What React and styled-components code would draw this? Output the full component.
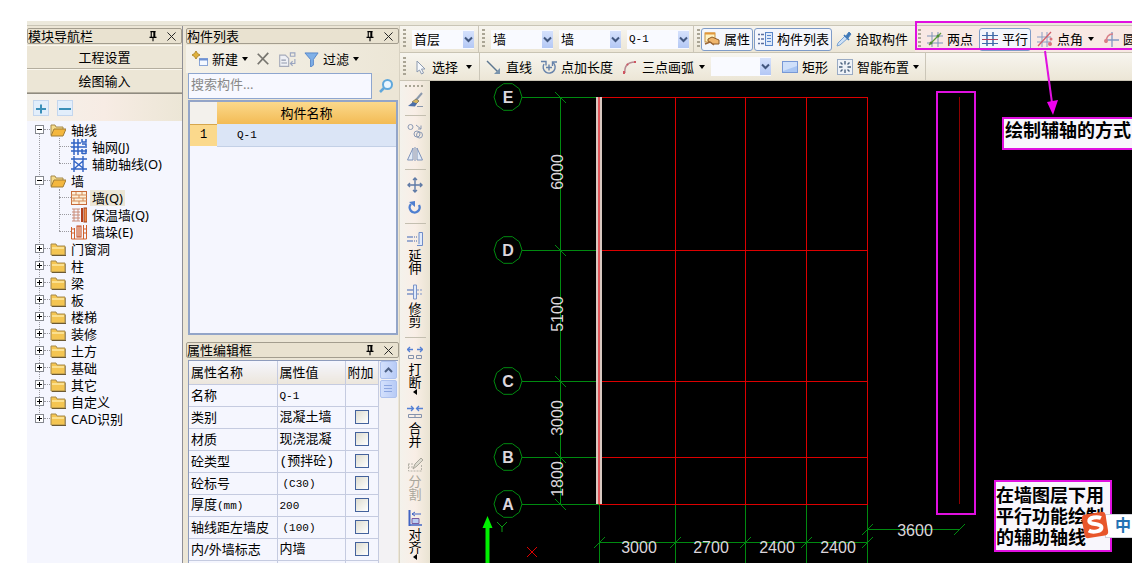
import React from 'react';
import styled, { createGlobalStyle, css } from 'styled-components';

const GlobalStyle = createGlobalStyle`
  * {
    box-sizing: border-box;
  }
  body {
    margin: 0;
    background: #fff;
    overflow: hidden;
  }
  body, button, input, select {
    font-family: 'Noto Sans', 'Noto Sans CJK SC', sans-serif;
    font-size: 13px;
    line-height: 16px;
    color: #000;
  }
  ul {
    list-style: none;
    margin: 0;
    padding: 0;
  }
`;

const Svg = ({ size = 16, children }) => (
  <svg width={size} height={size} viewBox="0 0 16 16" fill="none" aria-hidden="true">
    {children}
  </svg>
);

const icons = {
  pin: (
    <path d="M5 3h6M6 3v6M9 3v6M10 3v6M4 9.5h8M8 10v4" stroke="#000" strokeWidth="1.3" />
  ),
  close: <path d="M3 3l10 10M13 3L3 13" stroke="#222" strokeWidth="1.2" />,
  plus: (
    <>
      <rect x="0.5" y="0.5" width="15" height="15" fill="#e2eefb" stroke="#c3d6ee" />
      <path d="M3 9h10M8 4.500v9" stroke="#3a8fb8" strokeWidth="2" />
    </>
  ),
  minus: (
    <>
      <rect x="0.5" y="0.5" width="15" height="15" fill="#e2eefb" stroke="#c3d6ee" />
      <path d="M2 9h12" stroke="#3a8fb8" strokeWidth="2" />
    </>
  ),
  folder: (
    <>
      <path d="M1 3h5l1 2h8v9H1z" fill="#f4c552" stroke="#a58a4c" />
      <path d="M2 6h12v2H2z" fill="#fbe08f" />
      <path d="M2 14.500h14V6" stroke="#6c5a34" />
    </>
  ),
  folderOpen: (
    <>
      <path d="M1 13V3h4l1 2h7v3" fill="#f7dd8c" stroke="#a58a4c" />
      <path d="M1 14l3-7h12l-3 7z" fill="#f4b73e" stroke="#a07c35" />
    </>
  ),
  axisGrid: (
    <path
      d="M3 0v16M7 0v16M0 4h10M0 8h16M0 12h16M11 0v3h4V0M11 5h4v2M11 3h4M11 10v5M15 10v5M11 14.500h4"
      stroke="#2f62c4"
      strokeWidth="1.5"
    />
  ),
  axisHelp: (
    <path d="M3 0v16M12 0v16M0 3h16M0 13h16M3 5l9 7M12 5l-8 7" stroke="#2f62c4" strokeWidth="1.4" />
  ),
  wall: (
    <>
      <rect x="0.5" y="1.500" width="15" height="13" fill="#fdf0dc" stroke="#c66a3a" />
      <path d="M0 5h16M0 8h16M0 11h16M5 2v3M11 2v3M8 5v3M3 8v3M12 8v3M8 11v3" stroke="#d48a55" />
    </>
  ),
  wallWarm: (
    <>
      <path d="M1 2h8M1 5h8M1 8h8M1 11h8M1 14h8M3 2v12M7 2v12" stroke="#c98b79" />
      <rect x="10" y="1" width="2" height="14" fill="#b4401c" />
      <rect x="13" y="1" width="3" height="14" fill="#ef8d4c" stroke="#a0401c" />
    </>
  ),
  wallPier: (
    <>
      <path d="M.5 3v12M3.500 4v11M.5 15h15M12.500 1v14M15.500 1v14M0 5h4M0 9h4M12 5h4M12 9h4" stroke="#d0602c" />
      <rect x="6" y="2" width="4" height="11" fill="#fff3e8" stroke="#c2451a" />
      <path d="M8 2v11" stroke="#c2451a" />
    </>
  ),
  create: (
    <>
      <path d="M4 0l1.500 2.500L8 4 5.500 5.500 4 8 2.500 5.500 0 4l2.500-1.500z" fill="#e0b13c" stroke="#b28a2e" />
      <rect x="7.500" y="7.500" width="8" height="7" fill="#f4f8ff" stroke="#8ba6d6" />
      <path d="M7 8.500h9" stroke="#6f93d4" strokeWidth="2" />
    </>
  ),
  remove: <path d="M2 2l12 12M14 1L2 14" stroke="#77756f" strokeWidth="2" />,
  copyTo: (
    <>
      <path d="M1.500 4.500h5l3 3v7h-8z" fill="#eef0f5" stroke="#a6abba" />
      <path d="M3 9h4M3 11.500h5" stroke="#9299ad" />
      <path d="M11 2.500h4v3h-4zM15 8v4h-4M13 10l-2 2 2 2" stroke="#9aa5c0" />
    </>
  ),
  filter: <path d="M1 1h14L10 8v6l-3 2V8z" fill="#7fb0e8" stroke="#5685c7" />,
  search: (
    <>
      <circle cx="9.500" cy="6.500" r="4.500" fill="#eaf6ff" stroke="#5fa8dc" strokeWidth="2" />
      <path d="M6 10l-4 4" stroke="#5fa8dc" strokeWidth="2.500" />
    </>
  ),
  property: (
    <>
      <rect x="1" y="2" width="10" height="9" fill="#fff2c4" stroke="#c58f3c" />
      <path d="M1 2.500h10" stroke="#e2973a" strokeWidth="2" />
      <path d="M4 8l4-2 7 3v4H9L4 10z" fill="#efb56c" stroke="#8c5a28" />
      <path d="M1 13l5-2 4 3" stroke="#9b6634" strokeWidth="1.500" />
    </>
  ),
  list: (
    <>
      <path d="M1 3.500h2M1 8h2M1 12.500h2M4 3.500h3M4 8h3M4 12.500h3" stroke="#5a6fa0" strokeWidth="1.300" />
      <rect x="8.500" y="1.500" width="7" height="13" fill="#dfeafa" stroke="#5a86c8" />
      <path d="M10 4.500h4M10 7.500h4M10 10.500h4" stroke="#5a86c8" />
    </>
  ),
  dropper: (
    <>
      <path d="M9 5l-7 7-1 3 3-1 8-7z" fill="#cfe2f7" stroke="#7ba4d2" />
      <path d="M8 4l5 5" stroke="#3c78b8" strokeWidth="1.600" />
      <path d="M10 5l3-4 2 2-3 4z" fill="#3c78b8" stroke="#4c80ba" />
    </>
  ),
  twoPoint: (
    <>
      <path d="M5 1v15M11 1v15M0 5h16M0 12h16" stroke="#7d93b8" />
      <path d="M2 14L14 2" stroke="#5f9c3e" strokeWidth="1.300" />
      <circle cx="4" cy="12" r="1.500" fill="#4e8c35" />
      <circle cx="11" cy="5" r="1.500" fill="#4e8c35" />
    </>
  ),
  parallel: (
    <>
      <path d="M5 1v14M11 1v14" stroke="#3f69a8" strokeWidth="1.500" />
      <path d="M0 4.500h16M0 12.500h16" stroke="#3f69a8" />
      <path d="M0 8.500h16" stroke="#b0405c" />
    </>
  ),
  pointAngle: (
    <>
      <path d="M5 1v15M10 1v15M0 6h14M0 11h14" stroke="#8a9cc4" />
      <path d="M1 15L14 1" stroke="#d0606a" strokeWidth="1.300" />
      <circle cx="14" cy="8" r="1.500" fill="#d8737c" />
      <circle cx="13" cy="13" r="2" fill="#d8737c" />
    </>
  ),
  circleAxis: (
    <>
      <path d="M9 1v15M3 9h13" stroke="#8298c2" strokeWidth="1.300" />
      <path d="M10 3C5 3 3 6 3 12" stroke="#d87f88" strokeWidth="1.500" />
      <circle cx="3" cy="10" r="2" fill="#d87f88" />
    </>
  ),
  cursor: <path d="M5 2v11l2.500-2 2 4 2-1-2-4h3.500z" fill="#f6f8fb" stroke="#8c9ab0" />,
  line: (
    <>
      <path d="M1 2l11 11" stroke="#5c7690" strokeWidth="1.400" />
      <path d="M14 9v6H8z" fill="#7a94ad" />
    </>
  ),
  pointLength: (
    <>
      <path d="M3 5a6 6 0 1 0 9-1.500M8 5.500v6M5 8.500h6" stroke="#6682aa" strokeWidth="1.400" />
      <path d="M0 2.500h5v4M11.500 7V3H16" stroke="#6682aa" strokeWidth="1.400" />
    </>
  ),
  arc: (
    <>
      <path d="M3 14C2 7 6 3 13 3" stroke="#b98a92" strokeWidth="1.500" />
      <path d="M2 12v3M5 6l1-1M12 3h2" stroke="#cf5560" strokeWidth="2" />
    </>
  ),
  rect: (
    <>
      <rect x="0.500" y="2.500" width="15" height="11" fill="#a9c6f3" stroke="#7899d6" />
      <path d="M1 3h14v4L1 12z" fill="#cfe0fa" />
    </>
  ),
  smart: (
    <>
      <rect x="0.500" y="0.500" width="15" height="15" fill="#eef2f8" stroke="#9aabc4" />
      <path d="M8 2v3.500M8 10.500V14M2 8h3.500M10.500 8H14M3.500 3.500l2 2M12.500 3.500l-2 2M3.500 12.500l2-2M12.500 12.500l-2-2" stroke="#49617f" strokeWidth="1.400" />
    </>
  ),
  brush: (
    <>
      <path d="M15 1l-6 7" stroke="#8a98ac" strokeWidth="2" />
      <path d="M9 7l-4 3 3 3 4-4z" fill="#d9b65c" stroke="#8c8468" />
      <path d="M6 10L1 14l7 .5 2-3z" fill="#4c6fa8" />
      <path d="M10 14.500h6" stroke="#8a98ac" />
    </>
  ),
  copy: (
    <>
      <circle cx="3.500" cy="4" r="2.500" stroke="#8c9ab4" />
      <circle cx="10" cy="11" r="3" stroke="#8c9ab4" />
      <circle cx="12.500" cy="12" r="3" stroke="#8c9ab4" />
      <path d="M9 2l5 4M14 2.500V6h-3" stroke="#8c9ab4" />
    </>
  ),
  mirror: (
    <>
      <path d="M6 2v12H.5zM10 2v12h5.500z" fill="#e3ecf8" stroke="#7f93b8" />
      <path d="M8 1v14" stroke="#7f93b8" />
    </>
  ),
  move: (
    <path d="M8 1v14M1 8h14M6 3l2-2 2 2M6 13l2 2 2-2M3 6L1 8l2 2M13 6l2 2-2 2" stroke="#5f7aa6" strokeWidth="1.400" />
  ),
  rotate: (
    <>
      <path d="M4 4a5 5 0 1 0 8 1" stroke="#4f7fd0" strokeWidth="2.400" />
      <path d="M8 1v6L2 2z" fill="#4f7fd0" />
    </>
  ),
  extend: (
    <>
      <path d="M0 6h6M0 10h6" stroke="#7c94c8" strokeWidth="1.600" />
      <path d="M7 6h4M7 10h4" stroke="#4463a8" strokeDasharray="1 1" />
      <path d="M10 14.500h5.500v-13H12V13" fill="#e1eafa" stroke="#6f8cc8" />
    </>
  ),
  trim: (
    <>
      <path d="M0 6h6M0 10h6" stroke="#7c94c8" strokeWidth="1.400" />
      <path d="M10 6h6M10 10h6" stroke="#7c94c8" strokeDasharray="2 1" />
      <path d="M6.500 1v14h3V1z" fill="#e1eafa" stroke="#7c94c8" />
    </>
  ),
  breakApart: (
    <>
      <path d="M0 4.500h6M10 4.500h6M3 2L.5 4.500 3 7M13 2l2.500 2.500L13 7" stroke="#5580d4" strokeWidth="1.300" />
      <path d="M1.500 10.500h5v3h-5zM9.500 10.500h5v3h-5z" stroke="#8492ac" />
    </>
  ),
  merge: (
    <>
      <path d="M0 4.500h6M10 4.500h6M4 2l2.500 2.500L4 7M12 2L9.500 4.500 12 7" stroke="#5580d4" strokeWidth="1.300" />
      <path d="M1.500 10.500h13v3h-13zM8 10v4" stroke="#8492ac" />
    </>
  ),
  divide: (
    <>
      <path d="M1.500 7v7h13V7M1 7h6M1 10h5" stroke="#b5b2a8" strokeDasharray="2 1" />
      <path d="M6 12l2-5 6-6 2 2-6 6z" fill="#dedbd0" stroke="#aaa79c" />
    </>
  ),
  align: (
    <>
      <path d="M2.500 0v16" stroke="#4164c4" strokeWidth="2" />
      <path d="M5 4h9M8 2L5 4l3 2" stroke="#4164c4" />
      <path d="M5 8.500h7v5H5z" fill="#b9cdf3" stroke="#7a5ca0" />
      <path d="M2 15h13" stroke="#4164c4" strokeWidth="1.500" />
    </>
  ),
};

const Icon = ({ name, size }) => <Svg size={size}>{icons[name]}</Svg>;

const Page = styled.div`
  display: flex;
  flex-direction: column;
  height: 100vh;
  padding: 21px 0 0 27px;
  position: relative;
  overflow: hidden;
`;

const TopEdge = styled.div`
  flex: none;
  height: 5px;
  background: #ece9dc;
  border-bottom: 1px solid #c9c5b6;
`;

const Main = styled.main`
  flex: 1;
  min-height: 0;
  display: flex;
  background: #ece6d6;
`;

const Sidebar = styled.nav`
  flex: none;
  width: 156px;
  display: flex;
  flex-direction: column;
  padding-top: 2px;
  border-right: 1px solid #8f8f96;
`;

const Bar = styled.header`
  flex: none;
  display: flex;
  align-items: center;
  height: 16px;
  margin-bottom: 1px;
  border: 1px solid #a39d8e;
  border-radius: 2px;
  background: #e9e2d0;
  overflow: hidden;
`;

const BarTitle = styled.h2`
  flex: 1;
  margin: 0;
  font-size: 13px;
  font-weight: 400;
  line-height: 14px;
  white-space: nowrap;
`;

const BarButton = styled.button`
  display: flex;
  width: 19px;
  justify-content: center;
  padding: 0;
  border: 0;
  background: none;
`;

const PanelBar = ({ title }) => (
  <Bar>
    <BarTitle>{title}</BarTitle>
    <BarButton aria-label="固定">
      <Icon name="pin" size={14} />
    </BarButton>
    <BarButton aria-label="关闭">
      <Icon name="close" size={13} />
    </BarButton>
  </Bar>
);

const ModeButton = styled.button`
  flex: none;
  height: 24px;
  padding: 0;
  border: 0;
  border-bottom: 1px solid #b4ae9f;
  border-top: 1px solid #faf7ee;
  background: #ece6d6;
`;

const TreeTools = styled.div`
  flex: none;
  display: flex;
  gap: 8px;
  padding: 6px 6px;
  height: 28px;
  border-top: 1px solid #8f8b80;
  background: linear-gradient(90deg, #f4f1ea, #f7ece4 50%, #ece6d6);
`;

const PlainButton = styled.button`
  display: flex;
  align-items: center;
  padding: 0;
  border: 0;
  background: none;
`;

const Tree = styled.ul`
  flex: 1;
  position: relative;
  background: #f5f6fe;

  &::before {
    content: '';
    position: absolute;
    left: 12px;
    top: 9px;
    height: 289px;
    border-left: 1px dotted #9a9aa0;
  }
`;

const Branch = styled.ul`
  position: relative;

  &::before {
    content: '';
    position: absolute;
    left: 32px;
    top: 0;
    bottom: 9px;
    border-left: 1px dotted #9a9aa0;
  }
`;

const TreeRow = styled.div`
  display: flex;
  align-items: center;
  height: 17px;
  padding-left: ${(p) => (p.$child ? 32 : 8)}px;
  white-space: nowrap;
  position: relative;
`;

const Dots = styled.span`
  width: ${(p) => (p.$child ? 12 : 6)}px;
  border-bottom: 1px dotted #9a9aa0;
`;

const TreeText = styled.span`
  margin-left: 3px;
  padding: 0 2px;
  line-height: 16px;
  background: ${(p) => (p.$active ? '#ece6d6' : 'none')};
`;

const Expander = styled.button`
  width: 9px;
  height: 9px;
  padding: 0;
  border: 1px solid #85888f;
  background: #fff;
  display: flex;
`;

const TREE = [
  {
    name: '轴线',
    items: [
      ['轴网(J)', 'axisGrid'],
      ['辅助轴线(O)', 'axisHelp'],
    ],
  },
  {
    name: '墙',
    items: [
      ['墙(Q)', 'wall'],
      ['保温墙(Q)', 'wallWarm'],
      ['墙垛(E)', 'wallPier'],
    ],
  },
  ...['门窗洞', '柱', '梁', '板', '楼梯', '装修', '土方', '基础', '其它', '自定义', 'CAD识别'].map(
    (name) => ({ name })
  ),
];

const ModuleNav = () => (
  <Sidebar>
    <PanelBar title="模块导航栏" />
    <ModeButton>工程设置</ModeButton>
    <ModeButton>绘图输入</ModeButton>
    <TreeTools>
      <PlainButton aria-label="展开">
        <Icon name="plus" />
      </PlainButton>
      <PlainButton aria-label="折叠">
        <Icon name="minus" />
      </PlainButton>
    </TreeTools>
    <Tree>
      {TREE.map(({ name, items }) => (
        <li key={name}>
          <TreeRow>
            <Expander aria-label={name}>
              <svg width="7" height="7" viewBox="0 0 7 7">
                <path d={items ? 'M1 3.500h5' : 'M1 3.500h5M3.500 1v5'} stroke="#000" />
              </svg>
            </Expander>
            <Dots />
            <Icon name={items ? 'folderOpen' : 'folder'} />
            <TreeText>{name}</TreeText>
          </TreeRow>
          {items && (
            <Branch>
              {items.map(([text, icon]) => (
                <li key={text}>
                  <TreeRow $child>
                    <Dots $child />
                    <Icon name={icon} />
                    <TreeText $active={text === '墙(Q)'}>{text}</TreeText>
                  </TreeRow>
                </li>
              ))}
            </Branch>
          )}
        </li>
      ))}
    </Tree>
  </Sidebar>
);

const MiddleColumn = styled.section`
  flex: none;
  width: 214px;
  margin: 0 0 0 3px;
  padding-top: 2px;
  display: flex;
  flex-direction: column;
  border-right: 1px solid #d8d2c2;
`;

const ListTools = styled.div`
  flex: none;
  display: flex;
  align-items: center;
  gap: 8px;
  height: 28px;
  padding: 0 6px;
  background: linear-gradient(90deg, #f5f2ea, #ece6d6);
`;

const ToolLabel = styled(PlainButton)`
  gap: 4px;
`;

const Caret = styled.span`
  border: 3px solid transparent;
  border-top: 4px solid #000;
  border-bottom: 0;
  margin-left: ${(p) => p.$gap || 0}px;
`;

const SearchRow = styled.form`
  flex: none;
  display: flex;
  height: 26px;
  margin-left: 2px;
`;

const SearchInput = styled.input`
  width: 184px;
  padding: 0 2px 4px;
  border: 1px solid #8ea6cf;
  background: #f7f8ff;
  outline: 0;

  &::placeholder {
    color: #888;
  }
`;

const SearchButton = styled(PlainButton)`
  flex: 1;
  justify-content: center;
`;

const ListBox = styled.div`
  flex: none;
  height: 235px;
  margin: 1px 1px 7px 2px;
  border: 2px solid #93a5c8;
  background: #f5f6fe;
`;

const ListTable = styled.table`
  width: 100%;
  border-collapse: collapse;
  table-layout: fixed;

  th, td {
    height: 22px;
    padding: 0;
    font-weight: 400;
    line-height: 16px;
  }
  thead th {
    background: linear-gradient(#fbd98c, #f3bb55);
  }
  thead td {
    width: 27px;
    background: #f3f1ec;
  }
  tbody th {
    background: #fbd98c;
    border-top: 1px solid #d6a64c;
    font-size: 12px;
    font-family: 'Liberation Mono', monospace;
  }
  tbody td {
    padding-left: 20px;
    background: #dbe5f6;
    border-bottom: 1px solid #c3d0e6;
    font-size: 11px;
    font-family: 'Liberation Mono', monospace;
  }
`;

const PropertyBox = styled.div`
  flex: 1;
  min-height: 0;
  overflow: hidden;
  display: flex;
  margin: 1px 1px 0 2px;
  border-top: 1px solid #8e9cbc;
  border-left: 1px solid #8e9cbc;
  background: #f5f6fe;
`;

const PropertyTable = styled.table`
  align-self: flex-start;
  width: 189px;
  border-collapse: collapse;
  table-layout: fixed;

  th, td {
    height: 22px;
    padding: 0 2px;
    border: 1px solid #c5cbe0;
    border-top: 0;
    border-left: 0;
    text-align: left;
    font-weight: 400;
    line-height: 16px;
    white-space: nowrap;
    overflow: hidden;
  }
  thead th {
    height: 23px;
    background: linear-gradient(#f5f6fe, #ece6dc);
  }
`;

const Value = styled.span`
  font-family: 'Liberation Mono', 'Noto Sans CJK SC', monospace;
  font-size: ${(p) => (p.$latin ? 11 : 13)}px;
  padding-left: ${(p) => (p.$indent ? 3 : 0)}px;
`;

const Unit = styled.span`
  font-family: 'Liberation Mono', monospace;
  font-size: 11px;
`;

const Check = styled.input`
  appearance: none;
  display: block;
  width: 14px;
  height: 14px;
  margin: 0 auto;
  border: 1px solid #44629c;
  background: linear-gradient(135deg, #dedccf, #fff);
`;

const ScrollBar = styled.div`
  flex: 1;
  display: flex;
  flex-direction: column;
  align-items: center;
  gap: 1px;
  background: #f3f2f4;
`;

const ScrollPart = styled.button`
  display: flex;
  align-items: center;
  justify-content: center;
  width: 17px;
  height: 18px;
  padding: 0;
  border: 1px solid #aec2ee;
  border-radius: 2px;
  background: linear-gradient(90deg, #d3e0fc, #b8cbf6);
`;

const PROPERTIES = [
  { name: '名称', value: 'Q-1', latin: true, fixed: true },
  { name: '类别', value: '混凝土墙' },
  { name: '材质', value: '现浇混凝' },
  { name: '砼类型', value: '(预拌砼)' },
  { name: '砼标号', value: '(C30)', latin: true, indent: true },
  { name: '厚度', unit: '(mm)', value: '200', latin: true },
  { name: '轴线距左墙皮', value: '(100)', latin: true, indent: true },
  { name: '内/外墙标志', value: '内墙' },
  { name: '', value: '' },
];

const ComponentPanels = () => (
  <MiddleColumn>
    <PanelBar title="构件列表" />
    <ListTools>
      <ToolLabel>
        <Icon name="create" />
        新建
        <Caret />
      </ToolLabel>
      <PlainButton aria-label="删除">
        <Icon name="remove" size={14} />
      </PlainButton>
      <PlainButton aria-label="复制">
        <Icon name="copyTo" size={18} />
      </PlainButton>
      <ToolLabel>
        <Icon name="filter" size={15} />
        过滤
        <Caret />
      </ToolLabel>
    </ListTools>
    <SearchRow>
      <SearchInput aria-label="搜索构件" placeholder="搜索构件..." />
      <SearchButton type="button" aria-label="搜索">
        <Icon name="search" />
      </SearchButton>
    </SearchRow>
    <ListBox>
      <ListTable>
        <thead>
          <tr>
            <td />
            <th>构件名称</th>
          </tr>
        </thead>
        <tbody>
          <tr>
            <th>1</th>
            <td>Q-1</td>
          </tr>
        </tbody>
      </ListTable>
    </ListBox>
    <PanelBar title="属性编辑框" />
    <PropertyBox>
      <PropertyTable>
        <colgroup>
          <col width="88" />
          <col width="68" />
          <col width="33" />
        </colgroup>
        <thead>
          <tr>
            <th>属性名称</th>
            <th>属性值</th>
            <th>附加</th>
          </tr>
        </thead>
        <tbody>
          {PROPERTIES.map((p) => (
            <tr key={p.name}>
              <td>
                {p.name}
                {p.unit && <Unit>{p.unit}</Unit>}
              </td>
              <td>
                <Value $latin={p.latin} $indent={p.indent}>
                  {p.value}
                </Value>
              </td>
              <td>{!p.fixed && <Check type="checkbox" aria-label={`附加 ${p.name}`} />}</td>
            </tr>
          ))}
        </tbody>
      </PropertyTable>
      <ScrollBar>
        <ScrollPart aria-label="向上">
          <svg width="9" height="6" viewBox="0 0 9 6" fill="none">
            <path d="M1 5l3.500-3.500L8 5" stroke="#4d6185" strokeWidth="2" />
          </svg>
        </ScrollPart>
        <ScrollPart aria-label="滚动">
          <svg width="8" height="8" viewBox="0 0 8 8">
            <path d="M0 .5h8M0 3.500h8M0 6.500h8" stroke="#8ca6e0" />
          </svg>
        </ScrollPart>
      </ScrollBar>
    </PropertyBox>
  </MiddleColumn>
);

const Work = styled.section`
  flex: 1;
  min-width: 0;
  display: flex;
  flex-direction: column;
`;

const Toolbar = styled.div`
  flex: none;
  display: flex;
  height: ${(p) => p.$height}px;
  border-bottom: 1px solid #c9c4b4;
  background: linear-gradient(#f7f5ef, #ece6d6);
`;

const Group = styled.div`
  flex: none;
  display: flex;
  align-items: center;
  gap: ${(p) => p.$gap}px;
  padding: 0 ${(p) => p.$end ?? 4}px 0 3px;
  border-right: ${(p) => (p.$open ? 0 : '1px solid #cbc6b8')};
`;

const MarkedGroup = styled(Group)`
  flex: 1;
  min-width: 0;
  position: relative;
  background: #f8e8e4;

  &::after {
    content: '';
    position: absolute;
    inset: -5px -2px 2px 0;
    border: 2px solid #e010e0;
    pointer-events: none;
  }
`;

const Grip = styled.span`
  flex: none;
  width: 3px;
  height: 20px;
  background: repeating-linear-gradient(#aaa595 0 2px, transparent 2px 4px);
`;

const ToolButton = styled.button`
  flex: none;
  display: flex;
  align-items: center;
  gap: 4px;
  height: 23px;
  padding: 0 2px;
  border: 1px solid transparent;
  border-radius: 3px;
  background: none;
  white-space: nowrap;

  ${(p) =>
    p.$on &&
    css`
      border-color: #7f9cc8;
      background: #f4f6fc;
    `}
`;

const ComboBox = styled.span`
  position: relative;
  display: flex;
  width: ${(p) => p.$width || 62}px;
  margin-right: ${(p) => p.$after || 0}px;
`;

const ComboSelect = styled.select`
  appearance: none;
  width: 100%;
  height: 19px;
  padding: 0 12px 0 2px;
  border: 0;
  background: #f9faff;
  ${(p) =>
    p.$mono &&
    css`
      font-family: 'Liberation Mono', monospace;
      font-size: 11px;
    `}
`;

const ComboArrow = styled.span`
  position: absolute;
  right: 0;
  top: 1px;
  width: 11px;
  height: 17px;
  display: flex;
  align-items: center;
  justify-content: center;
  background: linear-gradient(#d5e1fc, #b4c8f5);
  pointer-events: none;
`;

const Combo = ({ label, value, ...rest }) => (
  <ComboBox {...rest}>
    <ComboSelect aria-label={label} $mono={value === 'Q-1'}>
      <option>{value}</option>
    </ComboSelect>
    <ComboArrow>
      <svg width="9" height="7" viewBox="0 0 9 7" fill="none">
        <path d="M1 1.500L4.500 5 8 1.500" stroke="#42577f" strokeWidth="2" />
      </svg>
    </ComboArrow>
  </ComboBox>
);

const Tool = ({ icon, text, on, caret }) => (
  <ToolButton $on={on}>
    <Icon name={icon} />
    {text}
    {caret !== undefined && <Caret $gap={caret} />}
  </ToolButton>
);

const Body = styled.div`
  flex: 1;
  min-height: 0;
  display: flex;
`;

const SideTools = styled.div`
  flex: none;
  width: 30px;
  display: flex;
  flex-direction: column;
  align-items: center;
  gap: 7px;
  padding-top: 4px;
  overflow: hidden;
  background: linear-gradient(90deg, #f4f2ec, #f9eee6 50%, #e9e3d2);
`;

const TopGrip = styled.span`
  flex: none;
  width: 20px;
  height: 2px;
  margin-bottom: -2px;
  background: repeating-linear-gradient(90deg, #aaa595 0 2px, transparent 2px 4px);
`;

const Rule = styled.span`
  flex: none;
  width: 21px;
  height: 1px;
  background: #c4bfb0;
`;

const SideButton = styled.button`
  flex: none;
  display: flex;
  flex-direction: column;
  align-items: center;
  gap: 2px;
  width: 20px;
  padding: 0 0 ${(p) => (p.$labelled ? 2 : 0)}px;
  border: 0;
  background: none;
  color: ${(p) => (p.disabled ? '#aaa79c' : '#000')};
`;

const SideText = styled.span`
  width: 13px;
  line-height: 13px;
  word-break: break-all;
`;

const SideCaret = styled.span`
  border: 3px solid transparent;
  border-right: 4px solid #000;
  border-left: 0;
  margin-top: -2px;
`;

const SIDE_TOOLS = [
  { icon: 'brush', label: '格式刷' },
  null,
  { icon: 'copy', label: '复制' },
  { icon: 'mirror', label: '镜像' },
  null,
  { icon: 'move', label: '移动' },
  { icon: 'rotate', label: '旋转' },
  null,
  { icon: 'extend', text: '延伸' },
  { icon: 'trim', text: '修剪' },
  null,
  { icon: 'breakApart', text: '打断', caret: true },
  { icon: 'merge', text: '合并' },
  { icon: 'divide', text: '分割', off: true },
  { icon: 'align', text: '对齐', caret: true },
];

const Canvas = styled.div`
  flex: 1;
  min-width: 0;
  position: relative;
  overflow: hidden;
  background: #000;

  > svg {
    display: block;
  }
`;

const AXES = [
  ['E', 16],
  ['D', 169],
  ['C', 300],
  ['B', 376],
  ['A', 423],
];
const COLUMNS = [169, 245, 315, 376, 437];
const SPANS_V = [
  ['6000', 91],
  ['5100', 233],
  ['3000', 337],
  ['1800', 398],
];
const SPANS_H = [
  ['3000', 209, 472],
  ['2700', 281, 472],
  ['2400', 347, 472],
  ['2400', 408, 472],
  ['3600', 485, 455],
];

const bubble = (cx, cy, r) =>
  Array.from({ length: 10 }, (_, i) => {
    const a = (i * Math.PI) / 5;
    return `${cx + r * Math.cos(a)},${cy + r * Math.sin(a)}`;
  }).join(' ');

const Drawing = () => (
  <svg width="100%" height="100%" fill="none" fontFamily="Liberation Sans, sans-serif">
    <g stroke="#008a10">
      <path d="M130.500 16V423M169 461.500H437M437 448.500H530" />
      {COLUMNS.map((x) => (
        <path key={x} d={`M${x + 0.5} 423V600M${x - 5} 467l11-11`} />
      ))}
      <path d="M432 454l11-11M524 454l11-11" />
      {AXES.map(([name, y]) => (
        <g key={name}>
          <polygon points={bubble(78, y, 14)} />
          <path d={`M92 ${y + 0.5}H169M125 ${y - 5}l11 11`} />
        </g>
      ))}
    </g>
    <g stroke="#dc0000">
      {AXES.map(([name, y]) => (
        <path key={name} d={`M169 ${y + 0.5}H438`} />
      ))}
      {COLUMNS.slice(1).map((x) => (
        <path key={x} d={`M${x + 0.5} 16V423`} />
      ))}
      <path d="M529.500 16V423" stroke="#8c0000" />
      <path d="M97 466l10 10M107 466l-10 10" />
    </g>
    <path d="M169 16V423" stroke="#d8c8c0" strokeWidth="6" />
    <path d="M169 16V423" stroke="#e0565a" strokeWidth="2" />
    <g fill="#dcd6dc" fontSize="16" textAnchor="middle">
      {AXES.map(([name, y]) => (
        <text key={name} x="78" y={y + 6} fontWeight="700">
          {name}
        </text>
      ))}
      {SPANS_V.map(([text, y]) => (
        <text key={text} transform={`translate(133 ${y}) rotate(-90)`}>
          {text}
        </text>
      ))}
      {SPANS_H.map(([text, x, y]) => (
        <text key={x} x={x} y={y}>
          {text}
        </text>
      ))}
    </g>
    <path d="M57.500 445V600" stroke="#00f000" strokeWidth="4" />
    <path d="M57.500 435l5 12h-10z" fill="#00f000" />
    <path d="M67 441l5 5 5-5M72 446v5" stroke="#0a9a12" />
  </svg>
);

const Highlight = styled.div`
  position: absolute;
  left: 506px;
  top: 10px;
  width: 40px;
  height: 424px;
  border: 2px solid #e010e0;
`;

const Note = styled.p`
  position: absolute;
  margin: 0;
  border: 2px solid #e010e0;
  background: #f8f6fc;
  font-size: 18px;
  font-weight: 700;
  line-height: 21px;
`;

const MethodNote = styled(Note)`
  left: 572px;
  top: 36px;
  width: 140px;
  height: 33px;
  padding: 1px;
  white-space: nowrap;
`;

const LayerNote = styled(Note)`
  left: 564px;
  top: 399px;
  width: 118px;
  height: 72px;
  padding: 3px 0;
`;

const Pointer = styled.svg`
  position: absolute;
  left: 1035px;
  top: 50px;
  pointer-events: none;
`;

const ImeBar = styled.div`
  position: absolute;
  left: 675px;
  top: 433px;
  right: 0;
  height: 24px;
  padding-left: 9px;
  border: 1px solid #d0d4dc;
  border-right: 0;
  background: #fff;
  color: #2272b4;
  font-size: 16px;
  font-weight: 700;
  line-height: 21px;
`;

const ImeLogo = styled.svg`
  position: absolute;
  left: 650px;
  top: 429px;
`;

const App = () => {
  return (
    <Page>
      <GlobalStyle />
      <TopEdge />
      <Main>
        <ModuleNav />
        <ComponentPanels />
        <Work>
          <Toolbar $height={27}>
            <Group $gap={6}>
              <Grip />
              <Combo label="楼层" value="首层" />
            </Group>
            <Group $gap={6}>
              <Grip />
              <Combo label="类别" value="墙" />
              <Combo label="构件类型" value="墙" />
              <Combo label="构件" value="Q-1" />
            </Group>
            <Group $gap={1} $end={4} $open>
              <Grip />
              <Tool icon="property" text="属性" on />
              <Tool icon="list" text="构件列表" on />
              <Tool icon="dropper" text="拾取构件" />
            </Group>
            <MarkedGroup $gap={3} $open>
              <Grip />
              <Tool icon="twoPoint" text="两点" />
              <Tool icon="parallel" text="平行" on />
              <Tool icon="pointAngle" text="点角" caret={1} />
              <Tool icon="circleAxis" text="圆" />
            </MarkedGroup>
          </Toolbar>
          <Toolbar $height={28}>
            <Group $gap={3}>
              <Grip />
              <Tool icon="cursor" text="选择" caret={4} />
            </Group>
            <Group $gap={3} $end={3}>
              <Tool icon="line" text="直线" />
              <Tool icon="pointLength" text="点加长度" />
              <Tool icon="arc" text="三点画弧" caret={1} />
              <Combo label="画弧方式" value="" $width={60} $after={5} />
              <Tool icon="rect" text="矩形" />
              <Tool icon="smart" text="智能布置" caret={0} />
            </Group>
          </Toolbar>
          <Body>
            <SideTools>
              <TopGrip />
              {SIDE_TOOLS.map((t, i) =>
                t ? (
                  <SideButton key={i} $labelled={!!t.text} disabled={t.off} aria-label={t.label}>
                    <Icon name={t.icon} />
                    {t.text && <SideText>{t.text}</SideText>}
                    {t.caret && <SideCaret />}
                  </SideButton>
                ) : (
                  <Rule key={i} />
                )
              )}
            </SideTools>
            <Canvas>
              <Drawing />
              <Highlight />
              <MethodNote>绘制辅轴的方式</MethodNote>
              <LayerNote>在墙图层下用平行功能绘制的辅助轴线</LayerNote>
              <ImeBar>中</ImeBar>
              <ImeLogo width="30" height="30" viewBox="0 0 30 30" fill="none">
                <g transform="rotate(-9 15 15)">
                  <rect x="3" y="3" width="24" height="24" rx="4" fill="#e8562a" />
                  <path
                    d="M22 9c-3-2-12-3-12 1.500 0 4 11 3 11 7.500 0 5-10 4-13 1.500"
                    stroke="#fff"
                    strokeWidth="4"
                  />
                </g>
              </ImeLogo>
            </Canvas>
          </Body>
        </Work>
      </Main>
      <Pointer width="30" height="66" viewBox="0 0 30 66">
        <path d="M10 1l7 52" stroke="#e010e0" strokeWidth="2" />
        <path d="M12 52l11-2-5 15z" fill="#f000f0" />
      </Pointer>
    </Page>
  );
};

export default App;
